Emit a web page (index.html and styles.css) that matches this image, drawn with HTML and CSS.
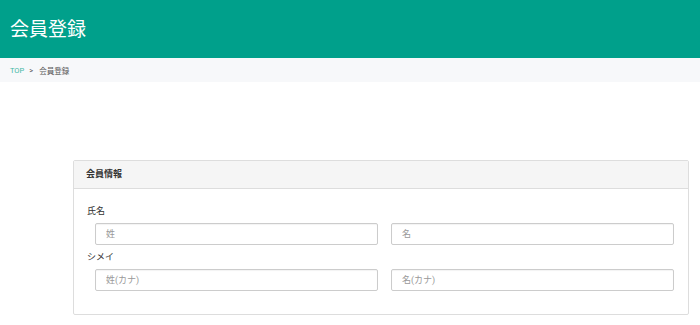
FILE: index.html
```html
<!DOCTYPE html>
<html lang="ja">
<head>
    <meta charset="utf-8">
    <title>会員登録</title>
    <link rel="stylesheet" href="styles.css">
</head>
<body>
    <!-- ヘッダー -->
    <div class="header">
        <h1>会員登録</h1>
    </div>

    <!-- パンくず -->
    <div class="breadcrumb">
        <a href="#">TOP</a>
        <span class="sep">&gt;</span>
        <span>会員登録</span>
    </div>

    <!-- 会員情報 -->
    <div class="main">
        <div class="panel">
            <div class="panel-heading">会員情報</div>
            <div class="panel-body">
                <div class="label">氏名</div>
                <div class="input-row">
                    <input type="text" placeholder="姓">
                    <input type="text" placeholder="名">
                </div>
                <div class="label label-second">シメイ</div>
                <div class="input-row">
                    <input type="text" placeholder="姓(カナ)">
                    <input type="text" placeholder="名(カナ)">
                </div>
            </div>
        </div>
    </div>
</body>
</html>
```

FILE: styles.css
```css
body {
    font-family: "Roboto", "Noto Sans CJK JP", sans-serif;
    margin: 0;
    padding: 0;
    color: #333;
    background-color: white;
}
.header {
    background-color: #00a08b;
    height: 58px;
    display: flex;
    align-items: center;
    padding: 0 10px;
}
.header h1 {
    margin: 0;
    color: white;
    font-size: 19px;
    font-weight: normal;
    margin-top: -4px;
}
.breadcrumb {
    background-color: #f7f8fa;
    height: 24px;
    display: flex;
    align-items: center;
    padding: 0 10px;
    font-size: 7.5px;
    color: #555;
}
.breadcrumb a {
    color: #3fb7a5;
    text-decoration: none;
}
.breadcrumb .sep {
    margin: 0 6px 0 5px;
}
.main {
    padding: 78px 11px 0 73px;
}
.panel {
    border: 1px solid #ddd;
    border-radius: 2px;
}
.panel-heading {
    background-color: #f5f5f5;
    border-bottom: 1px solid #ddd;
    height: 27px;
    line-height: 27px;
    padding: 0 12px;
    font-size: 9px;
    font-weight: bold;
}
.panel-body {
    padding: 14px 14px 23px 13px;
}
.label {
    font-size: 9px;
    line-height: 16px;
    margin-bottom: 4px;
}
.label-second {
    margin-top: 4px;
}
.input-row {
    display: grid;
    grid-template-columns: 1fr 1fr;
    gap: 13px;
    padding-left: 8px;
}
.input-row input {
    height: 22px;
    box-sizing: border-box;
    border: 1px solid #ccc;
    border-radius: 2px;
    box-shadow: inset 0 1px 1px rgba(0,0,0,0.05);
    padding: 0 10px;
    font-family: "Roboto", "Noto Sans CJK JP", sans-serif;
    font-size: 9px;
    color: #333;
    min-width: 0;
}
.input-row input::placeholder {
    color: #999;
}
```
